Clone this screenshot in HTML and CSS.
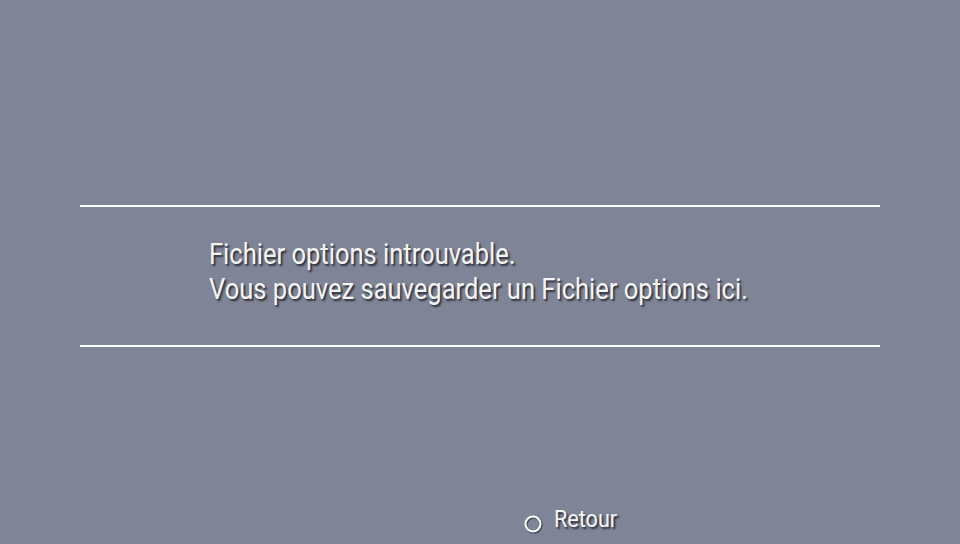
FILE: index.html
```html
<!DOCTYPE html>
<html lang="fr">
<head>
<meta charset="utf-8">
<link rel="stylesheet" href="styles.css">
</head>
<body>
<div class="screen">
  <div class="dialog">
    <div class="message">
      <p class="line">Fichier options introuvable.</p>
      <p class="line">Vous pouvez sauvegarder un Fichier options ici.</p>
    </div>
  </div>
  <div class="footer">
    <span class="btn">
      <svg class="circle" width="20" height="20" viewBox="0 0 20 20"><circle cx="11" cy="11" r="7.5" fill="none" stroke="#3a3d46" stroke-opacity="0.8" stroke-width="2.4"/><circle cx="10" cy="10" r="7.5" fill="none" stroke="#ffffff" stroke-width="2"/></svg>
      <span class="label">Retour</span>
    </span>
  </div>
</div>
</body>
</html>
```
FILE: styles.css
```css
html, body {
  margin: 0;
  padding: 0;
  background: #7f8596;
}
.screen {
  width: 960px;
  height: 544px;
  display: flex;
  flex-direction: column;
  font-family: Roboto, "Liberation Sans", sans-serif;
  color: #f4f4f4;
}
.dialog {
  margin: 205px 80px 0;
  height: 138px;
  border-top: 2px solid #ffffff;
  border-bottom: 2px solid #ffffff;
}
.message {
  padding: 30px 0 0 129px;
}
.line {
  margin: 0;
  font-size: 29px;
  line-height: 35px;
  white-space: nowrap;
  transform: scaleX(0.88);
  transform-origin: left center;
  text-shadow: 2px 2px 2px rgba(30, 32, 40, 0.85);
}
.footer {
  margin-top: auto;
  padding: 0 0 11px 523px;
}
.btn {
  display: flex;
  align-items: flex-start;
  gap: 11px;
  height: 28px;
}
.circle {
  margin-top: 9px;
  flex: none;
}
.label {
  font-size: 24px;
  line-height: 28px;
  transform: scaleX(0.9);
  transform-origin: left center;
  text-shadow: 2px 2px 2px rgba(30, 32, 40, 0.85);
}
```
